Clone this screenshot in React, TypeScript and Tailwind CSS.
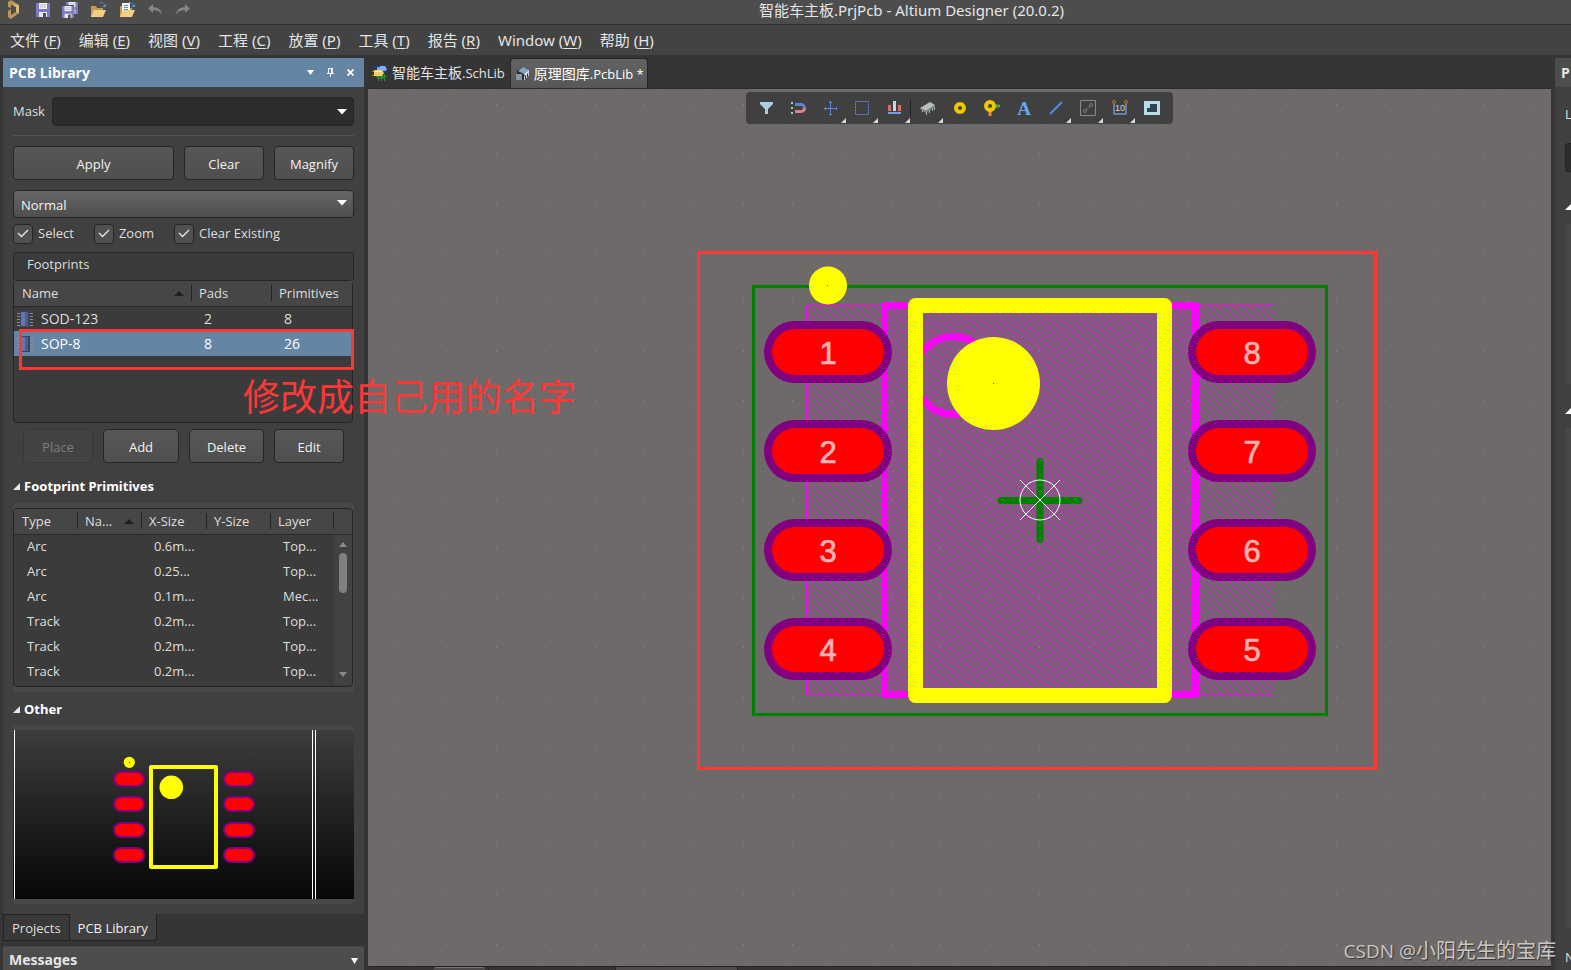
import type { ReactNode } from "react"
import clsx from "clsx"

const menus = [
  { label: "文件", hotkey: "F" },
  { label: "编辑", hotkey: "E" },
  { label: "视图", hotkey: "V" },
  { label: "工程", hotkey: "C" },
  { label: "放置", hotkey: "P" },
  { label: "工具", hotkey: "T" },
  { label: "报告", hotkey: "R" },
  { label: "Window", hotkey: "W" },
  { label: "帮助", hotkey: "H" },
]

const footprints = [
  { name: "SOD-123", pads: 2, primitives: 8 },
  { name: "SOP-8", pads: 8, primitives: 26 },
]

const primitives = [
  { type: "Arc", x: "0.6m...", layer: "Top..." },
  { type: "Arc", x: "0.25...", layer: "Top..." },
  { type: "Arc", x: "0.1m...", layer: "Mec..." },
  { type: "Track", x: "0.2m...", layer: "Top..." },
  { type: "Track", x: "0.2m...", layer: "Top..." },
  { type: "Track", x: "0.2m...", layer: "Top..." },
]

const pads = [
  { n: 1, x: 460, y: 263 },
  { n: 2, x: 460, y: 362 },
  { n: 3, x: 460, y: 461 },
  { n: 4, x: 460, y: 560 },
  { n: 8, x: 884, y: 263 },
  { n: 7, x: 884, y: 362 },
  { n: 6, x: 884, y: 461 },
  { n: 5, x: 884, y: 560 },
]

/* Title bar */

function FloppyIcon({ x = 0, y = 0, s = 14 }: { x?: number; y?: number; s?: number }) {
  return (
    <svg x={x} y={y} width={s} height={s} viewBox="0 0 14 14">
      <path d="M0 0h14v14H0z" fill="#7d7cc0" />
      <path d="M3 0h8v6H3z" fill="#f2f2f5" />
      <path d="M4 2h6M4 4h6" stroke="#b9b9cc" />
      <path d="M3 9h8v5H3z" fill="#e9e9ee" />
      <path d="M7 10h3v4H7z" fill="#4c4c66" />
    </svg>
  )
}

function FolderIcon({ doc }: { doc?: boolean }) {
  return (
    <svg width="17" height="16" viewBox="0 0 17 16">
      <path d="M1 4h5l1 2h6v9H1z" fill="#c49a4c" />
      {doc && (
        <>
          <path d="M3 1h8v10H3z" fill="#f4f4f4" />
          <path d="M5 3.500h4M5 5.500h4M5 7.500h4" stroke="#6d8fb5" />
        </>
      )}
      <path d="M4 8h12l-3 7H1z" fill="#f3cf85" />
      <path d="M10 .500h2.500l2 2" fill="none" stroke="#5b9bd0" strokeDasharray="2 1" />
      <path d="M12 5h4V2z" fill="#5b9bd0" />
    </svg>
  )
}

function UndoIcon({ flip }: { flip?: boolean }) {
  return (
    <svg width="15" height="12" viewBox="0 0 15 12" className={flip ? "-scale-x-100" : ""}>
      <path d="M5 0v3.200c5 0 8.500 2.300 9.300 8.300C12.500 7.800 10 6.200 5 6.300V9L0 4.500z" fill="#858585" />
    </svg>
  )
}

function TitleBar() {
  return (
    <header className="relative flex h-6 shrink-0 items-center bg-[#4d4d4d] pb-1">
      <svg width="13" height="20" viewBox="0 0 13 20" className="ml-[7px]" aria-hidden="true">
        <path d="M1 2 4 0l8 5v8l-8 6-3-2v-6l3-2v6l5-3V7L4 4v4L1 7z" fill="#b8975a" />
        <path d="m4 4 5 3v5l3 1V5z" fill="#d9bd7e" />
      </svg>
      <div className="ml-4 flex items-center gap-3">
        <button aria-label="Save"><FloppyIcon /></button>
        <button aria-label="Save all">
          <svg width="16" height="16" viewBox="0 0 16 16">
            <FloppyIcon x={4} y={0} s={12} />
            <path d="M0 3h12v13H0z" fill="#4d4d4d" />
            <FloppyIcon x={0} y={4} s={12} />
          </svg>
        </button>
        <button aria-label="Open"><FolderIcon /></button>
        <button aria-label="Open project"><FolderIcon doc /></button>
        <button aria-label="Undo"><UndoIcon /></button>
        <button aria-label="Redo"><UndoIcon flip /></button>
      </div>
      <h1 className="absolute inset-x-0 top-0 pl-[252px] text-center font-['Noto_Sans','Noto_Sans_CJK_SC',sans-serif] text-[15px] leading-5 text-[#e6e6e6]">
        智能车主板.PrjPcb - Altium Designer (20.0.2)
      </h1>
    </header>
  )
}

function MenuBar() {
  return (
    <nav className="flex h-[31px] shrink-0 items-center gap-[18px] border-t border-[#2e2e2e] bg-[#434343] pl-[10px] font-['Noto_Sans','Noto_Sans_CJK_SC',sans-serif] text-[15px] text-[#e4e4e4]">
      {menus.map((m) => (
        <button key={m.hotkey} className="whitespace-nowrap">
          {m.label} (<span className="underline underline-offset-2">{m.hotkey}</span>)
        </button>
      ))}
    </nav>
  )
}

/* PCB Library panel */

function Caret({ className }: { className?: string }) {
  return (
    <svg width="10" height="6" viewBox="0 0 10 6" className={className} aria-hidden="true">
      <path d="M0 0h10L5 5.500z" fill="#fff" />
    </svg>
  )
}

function PanelButton({ children, className, disabled }: { children: ReactNode; className?: string; disabled?: boolean }) {
  return (
    <button
      disabled={disabled}
      className={clsx(
        "h-[34px] rounded border pt-[3px] text-[13px]",
        disabled
          ? "border-[#383838] bg-[#434343] text-[#7d7d7d]"
          : "border-[#262626] bg-linear-to-b from-[#575757] to-[#4f4f4f] text-[#f2f2f2]",
        className,
      )}
    >
      {children}
    </button>
  )
}

function CheckOption({ label }: { label: string }) {
  return (
    <label className="flex items-center gap-[5px]">
      <span className="relative h-5 w-5">
        <input type="checkbox" defaultChecked className="block h-5 w-5 appearance-none rounded border border-[#262626] bg-[#505050]" />
        <svg width="12" height="9" viewBox="0 0 12 9" className="pointer-events-none absolute top-[5px] left-1">
          <path d="m1 4 3.500 3.500L11 1" fill="none" stroke="#e8e8e8" strokeWidth="1.300" />
        </svg>
      </span>
      {label}
    </label>
  )
}

function ChipIcon() {
  return (
    <svg width="16" height="16" viewBox="0 0 16 16" className="block">
      <path d="M0 2.500h16M0 5.500h16M0 8.500h16M0 11.500h16M0 14.500h16" stroke="#8f8f8f" strokeDasharray="3 10" />
      <path d="M3 0h10v16H3z" fill="#3a4266" />
      <path d="M4 1h4v14H4z" fill="#6377ab" />
      <path d="M8 1h3v14H8z" fill="#4f5e92" />
    </svg>
  )
}

function HeadCell({ children, sorted, last }: { children?: ReactNode; sorted?: boolean; last?: boolean }) {
  return (
    <th className="h-[25px] border-b border-[#2a2a2a] bg-[#464646] p-0 font-normal first:pl-px">
      <div className={clsx("flex h-4 items-center justify-between pl-[7px]", !last && "border-r border-[#242424]")}>
        {children}
        {sorted && (
          <svg width="10" height="5" viewBox="0 0 10 5" className="mr-[7px] shrink-0">
            <path d="M0 5h10L5 0z" fill="#202020" />
          </svg>
        )}
      </div>
    </th>
  )
}

function FootprintTable() {
  return (
    <div className="mr-px h-[143px] rounded border border-[#252525] bg-[#3b3b3b]">
      <table className="w-full table-fixed text-left">
        <colgroup>
          <col className="w-[178px]" />
          <col className="w-20" />
          <col />
        </colgroup>
        <thead>
          <tr>
            <HeadCell sorted>Name</HeadCell>
            <HeadCell>Pads</HeadCell>
            <HeadCell last>Primitives</HeadCell>
          </tr>
        </thead>
        <tbody className="text-sm">
          {footprints.map((f) => (
            <tr key={f.name} className={clsx("h-[25px]", f.name === "SOP-8" ? "bg-[#6485a4] text-white" : "")}>
              <td className="p-0">
                <span className="flex items-center gap-2 pl-[3px]">
                  <ChipIcon />
                  {f.name}
                </span>
              </td>
              <td className="p-0 pl-3">{f.pads}</td>
              <td className="p-0 pl-3">{f.primitives}</td>
            </tr>
          ))}
        </tbody>
      </table>
    </div>
  )
}

function PrimitiveTable() {
  return (
    <div className="rounded bg-[#484848] py-[5px] pr-px">
      <div className="h-[179px] overflow-hidden rounded border border-[#252525] bg-[#3b3b3b]">
        <table className="w-full table-fixed text-left">
          <colgroup>
            <col className="w-16" />
            <col className="w-16" />
            <col className="w-[65px]" />
            <col className="w-16" />
            <col className="w-[63px]" />
            <col />
          </colgroup>
          <thead>
            <tr>
              <HeadCell>Type</HeadCell>
              <HeadCell sorted>Na...</HeadCell>
              <HeadCell>X-Size</HeadCell>
              <HeadCell>Y-Size</HeadCell>
              <HeadCell>Layer</HeadCell>
              <HeadCell last />
            </tr>
          </thead>
          <tbody>
            {primitives.map((p, i) => (
              <tr key={i} className="h-[25px]">
                <td className="p-0 pl-[13px]">{p.type}</td>
                <td className="p-0" />
                <td className="p-0 pl-3">{p.x}</td>
                <td className="p-0" />
                <td className="p-0 pl-3">{p.layer}</td>
                {i === 0 && (
                  <td rowSpan={6} className="bg-[#424242] p-0">
                    <svg width="18" height="150" viewBox="0 0 18 150" className="block">
                      <path d="M5 12h8L9 7z" fill="#8a8a8a" />
                      <rect x="5" y="18" width="8" height="40" rx="4" fill="#808080" />
                      <path d="M5 137h8l-4 5z" fill="#8a8a8a" />
                    </svg>
                  </td>
                )}
              </tr>
            ))}
          </tbody>
        </table>
      </div>
    </div>
  )
}

function SectionTitle({ children, className }: { children: ReactNode; className?: string }) {
  return (
    <h3
      className={clsx(
        "flex items-center gap-1 font-['Noto_Sans','Noto_Sans_CJK_SC',sans-serif] text-[13px] leading-5 font-bold text-white",
        className,
      )}
    >
      <svg width="7" height="7" viewBox="0 0 7 7">
        <path d="M7 0v7H0z" fill="#e8e8e8" />
      </svg>
      {children}
    </h3>
  )
}

function Preview() {
  const rows = [49, 74, 100, 125]
  return (
    <div className="rounded bg-[#484848] py-[5px]">
      <div className="bg-linear-to-b from-[#3d3d3d] to-[#080808]">
        <svg width="341" height="169" viewBox="0 0 341 169" className="block">
          <path d="M1.500 0v169M299.500 0v169M302.500 0v169" stroke="#fff" />
          {rows.map((y) => (
            <g key={y} fill="#f00" stroke="#800080" strokeWidth="2">
              <rect x="101" y={y - 7} width="30" height="14" rx="7" />
              <rect x="211" y={y - 7} width="30" height="14" rx="7" />
            </g>
          ))}
          <rect x="138" y="37" width="65" height="100" fill="none" stroke="#ff0" strokeWidth="4" strokeLinejoin="round" />
          <circle cx="158.300" cy="57.300" r="11.800" fill="#ff0" />
          <circle cx="116.300" cy="32.300" r="5.600" fill="#ff0" />
          <path d="M116 32h1v1h-1z" fill="#222" />
        </svg>
      </div>
    </div>
  )
}

function LibraryPanel() {
  return (
    <aside className="flex w-[368px] shrink-0 flex-col bg-[#353535] pt-[3px] pr-1 pl-[3px] text-[13px] text-[#dedede]">
      <div className="flex h-[29px] shrink-0 items-center bg-[#6485a4] pl-[6px]">
        <h2 className="text-sm font-bold text-white">PCB Library</h2>
        <div className="mr-[10px] ml-auto flex items-center gap-[13px]">
          <button aria-label="Panel menu">
            <svg width="7" height="5" viewBox="0 0 7 5"><path d="M0 0h7L3.500 5z" fill="#fff" /></svg>
          </button>
          <button aria-label="Pin">
            <svg width="7" height="9" viewBox="0 0 7 9">
              <path d="M1.500 0v5M5 0v5M1 .500h5M0 5.500h7M3.500 5v4" fill="none" stroke="#fff" />
              <path d="M4 0h1.500v5H4z" fill="#fff" />
            </svg>
          </button>
          <button aria-label="Close">
            <svg width="7" height="7" viewBox="0 0 7 7"><path d="m.500.500 6 6m0-6-6 6" stroke="#fff" strokeWidth="1.700" /></svg>
          </button>
        </div>
      </div>

      <div className="flex grow flex-col bg-[#404040] px-[10px] pt-[10px]">
        <div className="flex items-center">
          <label htmlFor="mask" className="w-[39px]">Mask</label>
          <div className="relative grow">
            <input id="mask" className="block h-[29px] w-full rounded border border-[#262626] bg-[#2d2d2d] px-2" />
            <Caret className="absolute top-3 right-[7px]" />
          </div>
        </div>
        <hr className="mt-[9px] border-[#555]" />
        <div className="mt-[10px] flex gap-[10px]">
          <PanelButton className="grow">Apply</PanelButton>
          <PanelButton className="w-20">Clear</PanelButton>
          <PanelButton className="w-20">Magnify</PanelButton>
        </div>
        <div className="relative mt-[10px]">
          <select
            aria-label="Display mode"
            className="block h-7 w-full appearance-none rounded border border-[#262626] bg-linear-to-b from-[#666] to-[#4e4e4e] pt-[3px] pl-[7px] text-[#f2f2f2]"
          >
            <option>Normal</option>
          </select>
          <Caret className="pointer-events-none absolute top-[10px] right-[7px]" />
        </div>
        <div className="mt-[6px] flex gap-5">
          <CheckOption label="Select" />
          <CheckOption label="Zoom" />
          <CheckOption label="Clear Existing" />
        </div>

        <div className="mt-2 h-7 shrink-0 rounded-t border border-b-0 border-[#282828] bg-[#3b3b3b] pl-[13px] leading-[22px]">
          Footprints
        </div>
        <FootprintTable />
        <div className="mt-[6px] flex gap-[10px] px-[10px]">
          <PanelButton disabled className="w-[70px]">Place</PanelButton>
          <PanelButton className="w-[76px]">Add</PanelButton>
          <PanelButton className="grow">Delete</PanelButton>
          <PanelButton className="w-[70px]">Edit</PanelButton>
        </div>

        <SectionTitle className="mt-[13px] mb-[7px]">Footprint Primitives</SectionTitle>
        <PrimitiveTable />
        <SectionTitle className="mt-[7px] mb-[6px]">Other</SectionTitle>
        <Preview />
      </div>

      <div className="flex h-8 shrink-0 items-start leading-6">
        <button className="h-[27px] border border-[#222] bg-[#383838] px-2">Projects</button>
        <button className="h-[27px] rounded-b border border-t-0 border-l-0 border-[#222] bg-[#404040] px-2 pt-px text-[#f0f0f0]">PCB Library</button>
      </div>
      <div className="flex h-6 shrink-0 items-start border-t border-[#444] bg-[#4d4d4d] pt-[3px] pr-[6px] pl-[6px]">
        <h2 className="font-['Noto_Sans','Noto_Sans_CJK_SC',sans-serif] text-sm leading-5 font-bold text-[#e6e6e6]">Messages</h2>
        <svg width="7" height="6" viewBox="0 0 7 6" className="mt-2 ml-auto"><path d="M0 0h7L3.500 6z" fill="#fff" /></svg>
      </div>
    </aside>
  )
}

/* Editor */

function SchLibIcon() {
  return (
    <svg width="16" height="16" viewBox="0 0 16 16">
      <path d="M5 1h8l2 3-2 3H5z" fill="#7fb0f2" />
      <path d="M2 1.500h6M10 6.500h5" stroke="#1840a8" strokeWidth="1.500" />
      <path d="M5 10h8v4H5z" fill="#1f7a2c" />
      <path d="M4 11.500h11M6.500 9v7M9.500 9v7M12.500 9v7" stroke="#2f8a3a" />
      <path d="M0 6.500h3M0 10.500h3" stroke="#b08010" />
      <path d="M2 5h8l2 3-2 3H2z" fill="#f7cf68" />
      <path d="M3 6h6l1 1H3z" fill="#fff0b8" />
    </svg>
  )
}

function PcbLibIcon() {
  return (
    <svg width="16" height="16" viewBox="0 0 16 16">
      <path d="m3 5 6-4 6 3v5l-6 5-6-5z" fill="#2a2f36" />
      <path d="m4 5 5-4 6 3-5 4z" fill="#86a4bd" />
      <path d="m10 8 5-4v2l-4 4z" fill="#dfe8ee" />
      <path d="M12.500 8v4M14.500 6v4M10.500 10v4" stroke="#c8ccd0" />
      <path d="M2 8h6v6H2z" fill="#8b95a0" />
      <path d="M0 9.500h2M0 12.500h2" stroke="#555" />
    </svg>
  )
}

function EditorTabs() {
  return (
    <div role="tablist" className="flex h-[33px] shrink-0 items-end text-sm whitespace-nowrap text-[#e4e4e4]">
      <button role="tab" aria-selected="false" className="flex h-[30px] items-center gap-1 pr-[5px] pl-1">
        <SchLibIcon />
        <span>智能车主板<span className="text-[13px]">.SchLib</span></span>
      </button>
      <button
        role="tab"
        aria-selected="true"
        className="flex h-[30px] items-center gap-1 rounded-t border border-b-0 border-[#242424] bg-linear-to-b from-[#636363] to-[#575757] px-[3px] text-white"
      >
        <PcbLibIcon />
        <span>原理图库<span className="text-[13px]">.PcbLib *</span></span>
      </button>
    </div>
  )
}

const tools: { label: string; more?: boolean; icon: ReactNode }[] = [
  { label: "Filter", icon: <path d="M2 2h13v2l-5 5v5H7V9L2 4z" fill="#a9cfe0" /> },
  {
    label: "Snap",
    icon: (
      <>
        <path d="M1 2h2v2H1zM1 7h2v2H1zM1 12h2v2H1z" fill="#a5c7c4" />
        <path d="M5 4.500h6A3.500 3.500 0 0 1 14.500 8" fill="none" stroke="#5b82d8" strokeWidth="3" />
        <path d="M14.500 8a3.500 3.500 0 0 1-3.500 3.500H5" fill="none" stroke="#e07f86" strokeWidth="3" />
      </>
    ),
  },
  {
    label: "Move",
    more: true,
    icon: <path d="M8.500 1v14M2 8.500h13M7 2.500h3M7 14.500h3M3.500 7v3M14.500 7v3" stroke="#5f84de" />,
  },
  {
    label: "Select area",
    more: true,
    icon: <rect x="1.500" y="1.500" width="13" height="13" fill="none" stroke="#6688e0" strokeDasharray="2 1" />,
  },
  {
    label: "Align",
    more: true,
    icon: (
      <>
        <path d="M2 5h3v6H2zM12 5h3v6h-3z" fill="#d96a6a" />
        <path d="M7 1h3v10H7z" fill="#b9dbe8" />
        <path d="M2 13h13" stroke="#6f9fe0" strokeWidth="2" />
      </>
    ),
  },
  {
    label: "Place component",
    more: true,
    icon: (
      <>
        <path d="M1 8 11 2l5 3-9 6z" fill="#b9bdbf" />
        <path d="m7 11 9-6v2l-9 6-6-4V8z" fill="#7d8486" />
        <path d="M3.500 10v2M7.500 12v3M10.500 10v3M13.500 8v3M15.500 7v3" stroke="#a9b4b8" />
      </>
    ),
  },
  { label: "Place pad", icon: <circle cx="9" cy="8" r="4" fill="none" stroke="#f0c800" strokeWidth="4" /> },
  {
    label: "Place via",
    icon: (
      <>
        <path d="M10 6h7" stroke="#4da83c" strokeWidth="3" />
        <path d="M7 9v7" stroke="#e09040" strokeWidth="3" />
        <circle cx="7" cy="6" r="4" fill="#404040" stroke="#f0c800" strokeWidth="4" />
      </>
    ),
  },
  {
    label: "Place string",
    icon: (
      <text x="9" y="15" textAnchor="middle" fontSize="19" fontWeight="bold" fontFamily="'Liberation Serif', serif" fill="#68a8f0">
        A
      </text>
    ),
  },
  { label: "Place line", more: true, icon: <path d="M3 14 15 2" stroke="#4a90e8" strokeWidth="2" /> },
  {
    label: "Keepout",
    more: true,
    icon: (
      <>
        <path d="M1.500.500h15v15h-15z" fill="none" stroke="#8a8a8a" />
        <path d="m7 10 4-4" stroke="#777" />
        <circle cx="6" cy="11" r="1.500" fill="none" stroke="#777" />
        <circle cx="12" cy="5" r="1.500" fill="none" stroke="#777" />
      </>
    ),
  },
  {
    label: "Dimension",
    more: true,
    icon: (
      <>
        <path d="M3 4v10h12V4" fill="none" stroke="#6c94cc" strokeWidth="1.500" />
        <circle cx="3" cy="2" r="1.500" fill="none" stroke="#b08030" />
        <circle cx="15" cy="2" r="1.500" fill="none" stroke="#b08030" />
        <text x="9" y="11" textAnchor="middle" fontSize="9" fontFamily="'Liberation Sans', sans-serif" fill="#d8d8d8">
          10
        </text>
      </>
    ),
  },
  {
    label: "Polygon",
    icon: (
      <>
        <path d="M1 1h16v14H1z" fill="#b8dcec" />
        <path d="M7 4h7v8H4V8h3z" fill="#2f4350" />
      </>
    ),
  },
]

function Toolbar() {
  return (
    <div role="toolbar" className="relative flex h-8 rounded bg-[#404040] pr-[6px] pl-1">
      {tools.map((t, i) => (
        <div key={t.label} className="flex items-center">
          {i === 5 && <span className="h-4 w-px bg-[#222]" />}
          <button aria-label={t.label} className="relative flex h-8 w-8 items-center justify-center">
            <svg width="16" height="16" viewBox="0 0 16 16" className="overflow-visible">{t.icon}</svg>
            {t.more && (
              <svg width="5" height="5" viewBox="0 0 5 5" className="absolute right-0 bottom-px">
                <path d="M5 0v5H0z" fill="#dcdcdc" />
              </svg>
            )}
          </button>
        </div>
      ))}
    </div>
  )
}

const GRID = 9.88

// dark dot on every grid step, light dot on every fifth
function gridPath(major: boolean) {
  let d = ""
  for (let i = 0; i < 200; i++) {
    for (let j = 0; j < 130; j++) {
      const isMajor = i % 5 === 2 && j % 5 === 1
      if (isMajor !== major) continue
      d += `M${Math.round(9.3 + i * GRID)} ${Math.round(5 + j * GRID)}h1v1h-1z`
    }
  }
  return d
}

// one-pixel staircase running down-right inside a square tile
function stairs(size: number) {
  let d = ""
  for (let i = 0; i < size; i++) d += `M${i} ${i}h1v1h-1z`
  return d
}

const minorDots = gridPath(false)
const majorDots = gridPath(true)

function FootprintDrawing() {
  return (
    <svg className="absolute inset-0 h-full w-full" role="img" aria-label="SOP-8 footprint">
      <defs>
        <pattern id="hatch" width="8" height="8" patternUnits="userSpaceOnUse">
          <path d={stairs(8)} fill="#f0f" shapeRendering="crispEdges" />
        </pattern>
        <pattern id="hatchDense" width="5" height="5" patternUnits="userSpaceOnUse">
          <path d={stairs(5)} fill="#f0f" shapeRendering="crispEdges" />
        </pattern>
      </defs>
      <g shapeRendering="crispEdges">
        <path d={minorDots} fill="#5f5b5a" />
        <path d={majorDots} fill="#8f8b8a" />
        <rect x="438.500" y="216.500" width="78" height="389" fill="url(#hatch)" stroke="#f0f" />
        <rect x="827.500" y="216.500" width="78" height="389" fill="url(#hatch)" stroke="#f0f" />
        <rect x="516" y="217" width="312" height="389" fill="url(#hatchDense)" />
        <rect x="385.500" y="197.500" width="573" height="428" fill="none" stroke="#008000" strokeWidth="3" />
      </g>
      <rect x="516.500" y="216.500" width="311" height="389" fill="none" stroke="#f0f" strokeWidth="7" strokeLinejoin="round" />
      <circle cx="585.500" cy="286.500" r="39" fill="none" stroke="#f0f" strokeWidth="7" />
      <rect x="547.500" y="216.500" width="249" height="390" fill="none" stroke="#ff0" strokeWidth="15" strokeLinejoin="round" />
      {pads.map((p) => (
        <g key={p.n}>
          <rect x={p.x - 64} y={p.y - 31} width="128" height="62" rx="31" fill="#800080" />
          <rect x={p.x - 56} y={p.y - 23} width="112" height="46" rx="23" fill="#f00" />
          <text
            x={p.x}
            y={p.y + 12}
            textAnchor="middle"
            fontSize="31"
            fontFamily="'Liberation Sans', Arial, sans-serif"
            fill="#ffb3b3"
            stroke="#ffb3b3"
            strokeWidth=".7"
          >
            {p.n}
          </text>
        </g>
      ))}
      <circle cx="460" cy="196.500" r="19" fill="#ff0" />
      <circle cx="625.500" cy="294.500" r="46.500" fill="#ff0" />
      <path d="M459 196h1v1h-1zM625 294h1v1h-1z" fill="#806000" />
      <path d="M633 411.500h78M672 372.500v78" stroke="#008000" strokeWidth="7" strokeLinecap="round" />
      <g fill="none" stroke="#fff">
        <circle cx="672" cy="411" r="20" />
        <path d="m652 391 40 40M692 391l-40 40" />
      </g>
      <rect x="330.500" y="163.500" width="677" height="516" fill="none" stroke="#ff3737" strokeWidth="3" />
    </svg>
  )
}

function Editor() {
  return (
    <main className="flex min-w-0 grow flex-col">
      <EditorTabs />
      <section className="relative grow overflow-hidden border-t border-[#2c2c2c] bg-[#6e6a69]">
        <FootprintDrawing />
        <div className="relative flex justify-center pt-[3px]">
          <Toolbar />
        </div>
      </section>
      <div className="flex h-1 shrink-0 border-t border-[#222] bg-[#353535]">
        <div className="ml-[66px] w-[51px] rounded-t border-t border-[#777] bg-[#4a4a4a]" />
        <div className="ml-[3px] w-[128px] border-x border-[#222]" />
        <div className="w-[121px] bg-[#4d4d4d]" />
        <div className="w-px bg-[#222]" />
      </div>
    </main>
  )
}

function PropertiesEdge() {
  return (
    <aside className="flex w-5 shrink-0 flex-col overflow-hidden bg-[#353535] pt-[3px] pl-1 text-[13px] text-[#dedede]">
      <h2 className="h-[29px] shrink-0 bg-[#4d4d4d] pl-[6px] text-sm leading-[29px] font-bold text-[#e6e6e6]">P</h2>
      <div className="flex grow flex-col overflow-hidden bg-[#404040] pt-4 pl-[10px]">
        <span className="h-5 leading-[22px]">L</span>
        <div className="mt-5 h-[29px] shrink-0 rounded-l border border-r-0 border-[#222] bg-[#2d2d2d]" />
        <svg width="7" height="7" viewBox="0 0 7 7" className="mt-[31px] shrink-0"><path d="M7 0v7H0z" fill="#fff" /></svg>
        <div className="mt-[14px] h-[160px] shrink-0 rounded-l bg-[#484848]" />
        <svg width="7" height="7" viewBox="0 0 7 7" className="mt-[23px] shrink-0"><path d="M7 0v7H0z" fill="#fff" /></svg>
        <div className="mt-[14px] mb-[18px] grow rounded-l bg-[#484848]" />
        <span className="h-6 leading-[22px]">N</span>
      </div>
    </aside>
  )
}

export default function App() {
  return (
    <div className="relative flex h-screen flex-col overflow-hidden bg-[#353535] font-['Open_Sans','Noto_Sans_CJK_SC',sans-serif]">
      <TitleBar />
      <MenuBar />
      <div className="flex min-h-0 grow">
        <LibraryPanel />
        <Editor />
        <PropertiesEdge />
      </div>

      {/* Notes drawn over the window */}
      <div className="pointer-events-none absolute top-[329px] left-[19px] h-[41px] w-[335px] border-3 border-[#ff3737]" />
      <p className="pointer-events-none absolute top-[374px] left-[243px] text-[37px] leading-[46px] whitespace-nowrap text-[#ff3737]">
        修改成自己用的名字
      </p>
      <p className="pointer-events-none absolute right-[15px] bottom-[5px] text-[20px] leading-7 whitespace-nowrap text-[#c9c7c6] [text-shadow:1px_1px_1px_#333]">
        <span className="text-[19px]">CSDN @</span>小阳先生的宝库
      </p>
    </div>
  )
}
